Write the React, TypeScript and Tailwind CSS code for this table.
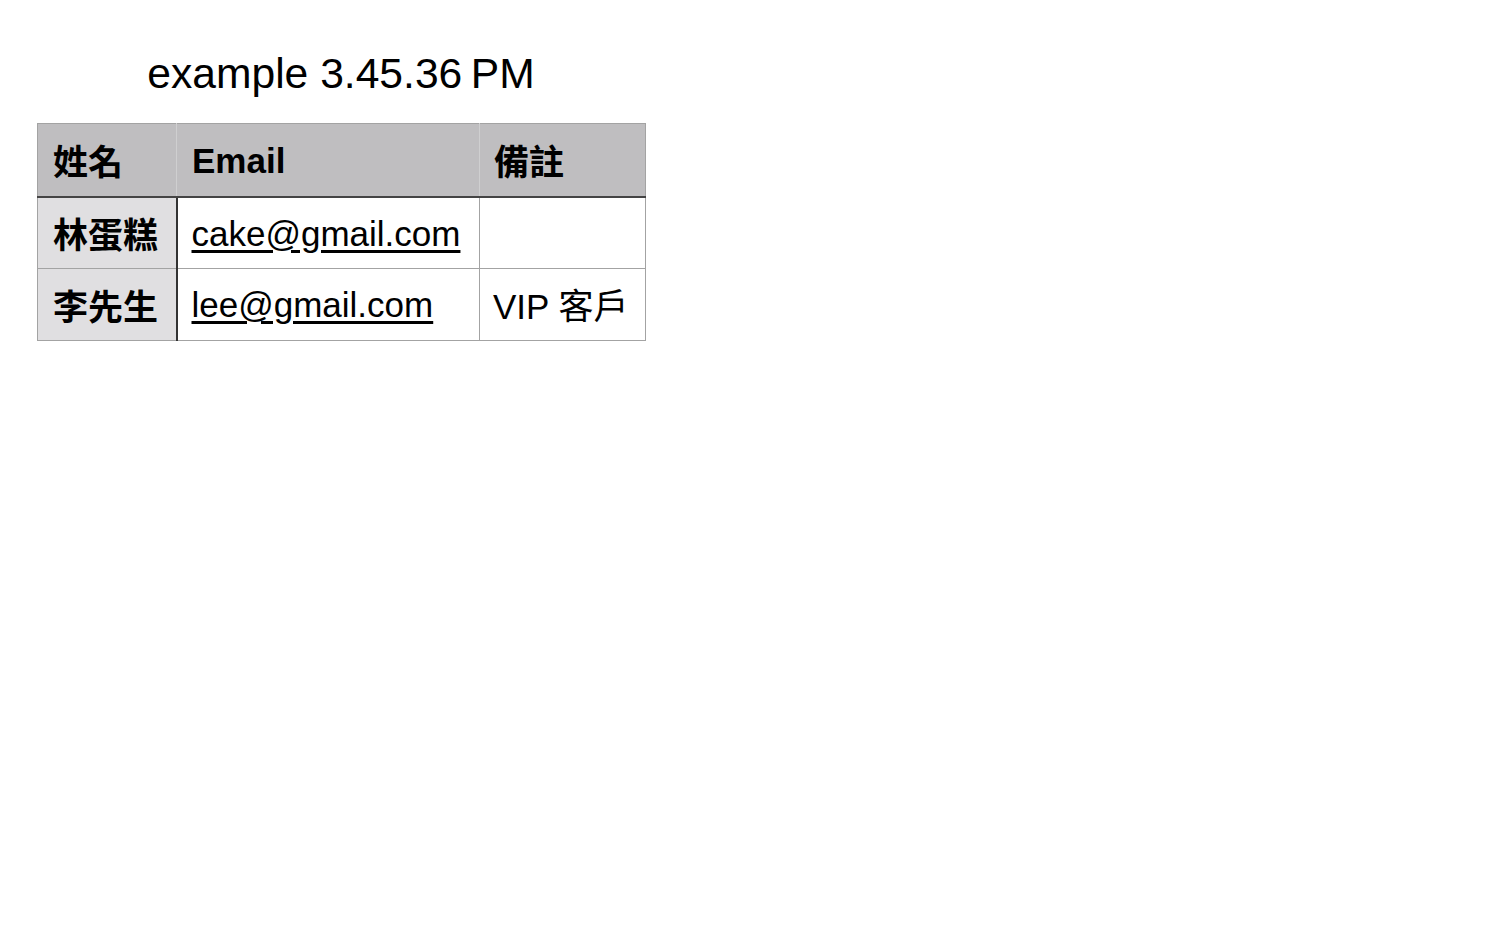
const rows = [
  { name: "林蛋糕", email: "cake@gmail.com", note: "" },
  { name: "李先生", email: "lee@gmail.com", note: "VIP 客戶" },
];

const font = "font-['Liberation_Sans','Noto_Sans_CJK_TC',sans-serif]";

export default function App() {
  return (
    <div className={`min-h-screen bg-white text-black ${font}`}>
      <div className="ml-[37px] w-[608px] pt-[49px]">
        <div className="text-center text-[42.6px] leading-[49px]">
          example 3.45.36{"\u202F"}PM
        </div>
        <table className="mt-[25px] w-[608px] table-fixed border-collapse text-[35px]">
          <colgroup>
            <col className="w-[139px]" />
            <col className="w-[303px]" />
            <col className="w-[166px]" />
          </colgroup>
          <thead>
            <tr className="h-[73px] bg-[#bfbec0]">
              <th className="border-t border-l border-[#a3a3a3] border-r-[#cfcfd0] border-r border-b-2 border-b-[#444] pl-[15px] pt-[7px] text-left font-bold">
                姓名
              </th>
              <th className="border-t border-[#a3a3a3] border-r border-r-[#cfcfd0] border-b-2 border-b-[#444] pl-[15px] pt-[2px] text-left font-bold">
                Email
              </th>
              <th className="border-t border-r border-[#a3a3a3] border-b-2 border-b-[#444] pl-[14px] pt-[7px] text-left font-bold">
                備註
              </th>
            </tr>
          </thead>
          <tbody>
            {rows.map((r) => (
              <tr key={r.email} className="h-[72px]">
                <th className="border-l border-b border-[#a3a3a3] border-r-2 border-r-[#333] bg-[#e0dfe1] pl-[15px] pt-[7px] text-left font-bold">
                  {r.name}
                </th>
                <td className="border-b border-r border-[#a3a3a3] pl-[14px] pt-[2px]">
                  <a href="#" className="underline underline-offset-[4px]">
                    {r.email}
                  </a>
                </td>
                <td className="border-b border-r border-[#a3a3a3] pl-[13px] pt-[5px]">{r.note}</td>
              </tr>
            ))}
          </tbody>
        </table>
      </div>
    </div>
  );
}
